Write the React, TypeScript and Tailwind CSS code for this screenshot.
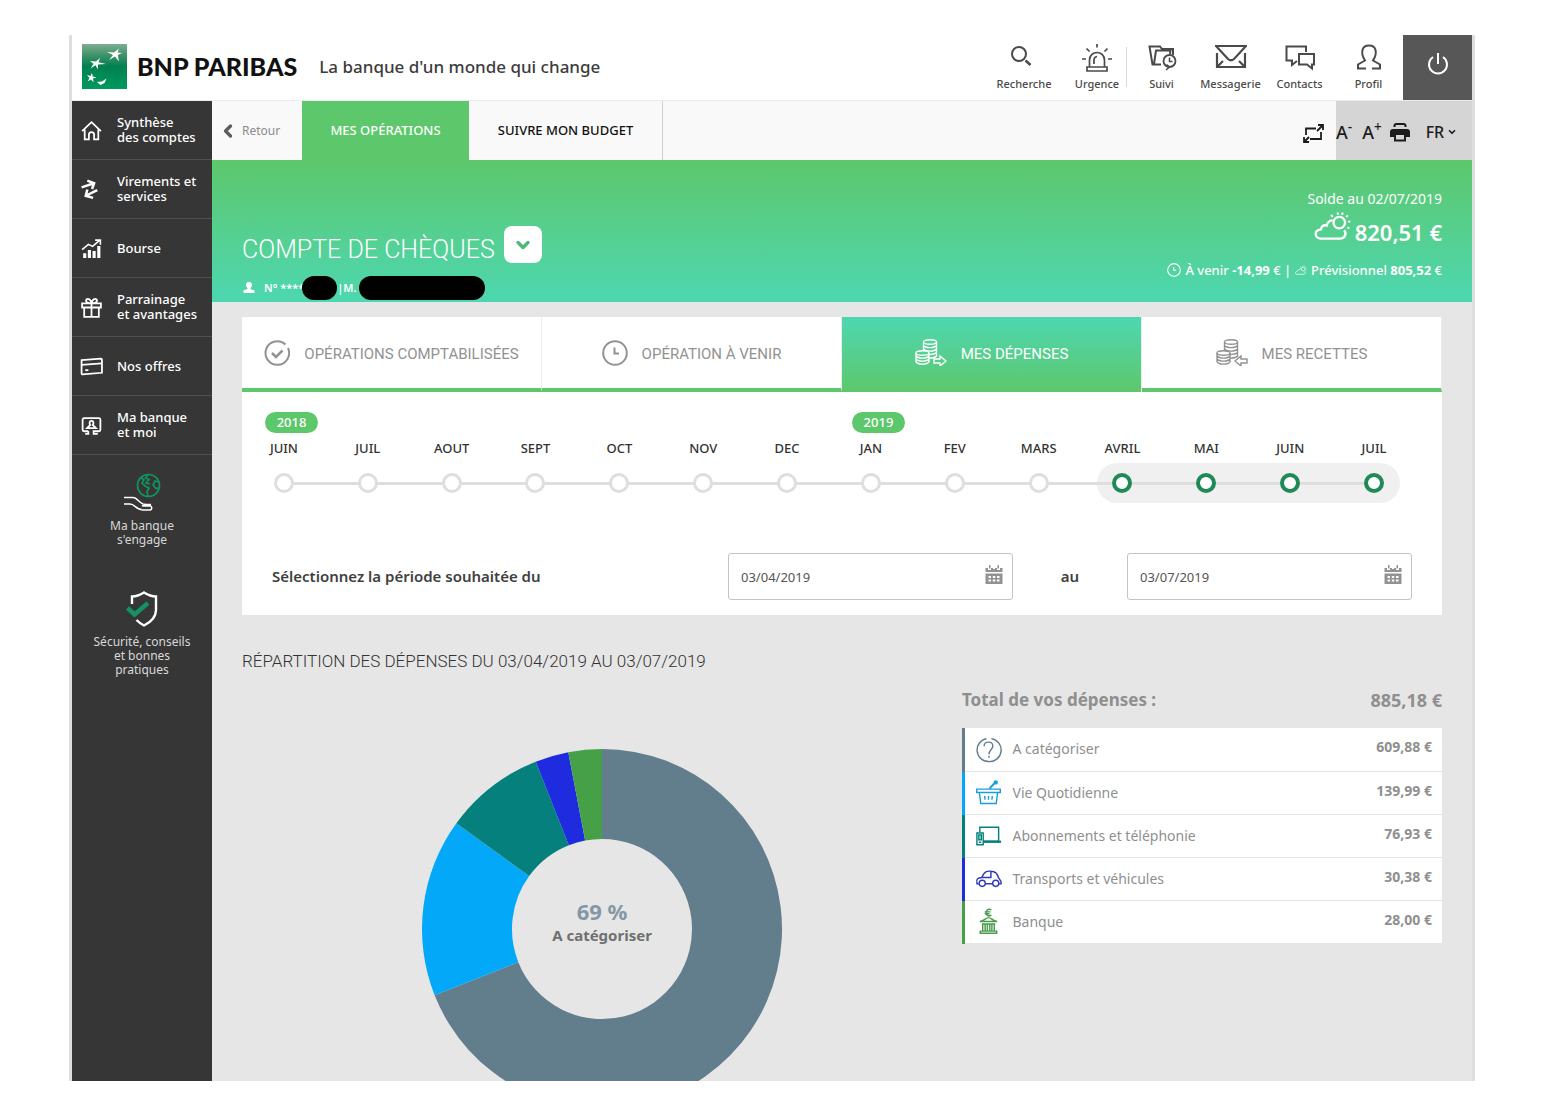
import { useState } from 'react'
import type { ReactNode } from 'react'
import { ChevronDown, ChevronLeft } from 'lucide-react'

const CONDENSED = "font-['Liberation_Sans_Narrow','Roboto',sans-serif]"

interface SvgProps {
  className: string
  viewBox?: string
  strokeWidth?: number
  children: ReactNode
}

function Svg({ className, viewBox = '0 0 32 32', strokeWidth = 2, children }: SvgProps) {
  return (
    <svg
      className={className}
      viewBox={viewBox}
      fill="none"
      stroke="currentColor"
      strokeWidth={strokeWidth}
      aria-hidden="true"
    >
      {children}
    </svg>
  )
}

function Logo() {
  return (
    <svg className="size-[45px] shrink-0" viewBox="0 0 45 45" aria-hidden="true">
      <defs>
        <linearGradient id="logo" x1="0" y1="0" x2="0" y2="1">
          <stop offset="0" stopColor="#7fae93" />
          <stop offset="0.25" stopColor="#3f9268" />
          <stop offset="0.5" stopColor="#008050" />
          <stop offset="1" stopColor="#009a5e" />
        </linearGradient>
      </defs>
      <rect width="45" height="45" fill="url(#logo)" />
      <g fill="#fff">
        <path d="M25 8 L32 8.500 L37 4.500 L35.500 8.500 L40 9 L35.800 11 L37 17.500 L33 12.500 L27 16 L31 11 Z" />
        <path d="M8 17 L14 17.500 L18 14 L16.500 18.200 L24 20 L16 20.500 L16 25.500 L13.500 21.200 L8.500 24.500 L11.500 19.800 Z" />
        <path d="M5 31 L8.500 32 L10 29 L10.800 32.500 L14.500 33.500 L11 34.500 L11.500 38.500 L9 35.500 L5.500 37.500 L7.500 34 Z" />
        <path d="M15 38 L20 37.500 L24.500 34.500 L22.500 39 L18.500 41 Z" />
      </g>
    </svg>
  )
}

function HandGlobe() {
  return (
    <Svg className="h-[38px] w-10" viewBox="0 0 40 38">
      <g stroke="#12935f" strokeWidth="1.7">
        <circle cx="26.500" cy="12.500" r="11" />
        <path d="M19 4.500 L22 7 L20 10 L23 13 L27 15 L25 18.500 L26 23 M26 2 L23.500 5 L27 6.500 L24 10 L28 11 M37 9 L33 8 L31 12 L34 15.500 L36.500 15" />
      </g>
      <path
        d="M2 24.500 h9 c4 0 6 5 10 6.500 l3 0.500 M2 31 h6 c5 0 6 6 13 6 h7 c2 0 2.500-4 0-4 h-7 M20 33 l4-1.500 h5"
        stroke="#fff"
        strokeWidth="1.500"
      />
    </Svg>
  )
}

function ShieldCheck() {
  return (
    <Svg className="h-9 w-8" viewBox="0 0 32 36">
      <path
        d="M6 13 V5.500 C11 5.500 14 4 18 1.500 C22 4 25 5.500 30 5.500 V19 C30 27 24 31.500 18 34.500 C15 33 12.500 31 10.500 29"
        stroke="#fff"
        strokeWidth="2.400"
      />
      <path d="M1.500 17 L8.500 23.500 L22 12" stroke="#12935f" strokeWidth="4.500" />
    </Svg>
  )
}

function Clock({ className }: { className: string }) {
  return (
    <Svg className={className} viewBox="0 0 26 26">
      <circle cx="13" cy="13" r="11.800" />
      <path d="M12.500 7.500 V13.500 H17" />
    </Svg>
  )
}

function CloudSun({ className }: { className: string }) {
  return (
    <Svg className={className} viewBox="0 0 38 30" strokeWidth={2.4}>
      <path d="M31 20 c3 3 1 8.500-4 8.500 H7 c-7 0-7.500-8.500 0-9.500 c1-4 4-4.500 6-4 c1-4 3-5 6-5.500" />
      <circle cx="26" cy="12" r="6" />
      <path
        d="M24.500 1.500 v2.500 M29.500 1.500 l-0.500 2.500 M17.500 4 l1.800 2 M35 4.500 l-2 1.800 M37.500 11 h-2.500 M36.500 18 l-2.200-1"
        strokeWidth="2"
      />
    </Svg>
  )
}

function Coins({ incoming = false }: { incoming?: boolean }) {
  return (
    <Svg className="h-[27px] w-8" viewBox="0 0 32 27" strokeWidth={1.4}>
      <ellipse cx="15" cy="3" rx="6.500" ry="2.200" />
      <path d="M8.500 3 V12 M21.500 3 V18 M8.500 6.500 c2 2.800 11 2.800 13 0 M8.500 10 c2 2.800 11 2.800 13 0 M14 15.500 c3 0 6-0.500 7.500-2 M14.500 19 c3 0 6-0.500 7-2" />
      <ellipse cx="7.500" cy="14" rx="6.500" ry="2.200" />
      <path d="M1 14 V22.500 c1 3.500 12 3.500 13 0 V14 M1 17 c2 2.800 11 2.800 13 0 M1 20 c2 2.800 11 2.800 13 0" />
      {incoming ? (
        <path d="M31 20 h-6 v-3 l-6 5 l6 5 v-3 h6 Z" />
      ) : (
        <path d="M19 20 h6 v-3 l6 5 l-6 5 v-3 h-6 Z" />
      )}
    </Svg>
  )
}

function Calendar() {
  return (
    <svg
      className="absolute top-[11px] right-[10px] h-5 w-[18px] text-[#929292]"
      viewBox="0 0 18 20"
      fill="currentColor"
      aria-hidden="true"
    >
      <path d="M0.500 4 h2.500 v2 h3 v-2 h2 v1 h2 v-1 h2 v2 h3 v-2 h2.500 v4 H0.500 Z M4 1 h1.500 v3.500 H4 Z M12.500 1 H14 v3.500 h-1.500 Z" />
      <path d="M0.500 9.500 h17 v10.500 H0.500 Z" />
      <path
        d="M3.500 12 h2.500 v2 H3.500 Z M7.800 12 h2.500 v2 H7.800 Z M12 12 h2.500 v2 h-2.500 Z M3.500 15.500 h2.500 v2 H3.500 Z M7.800 15.500 h2.500 v2 H7.800 Z M12 15.500 h2.500 v2 h-2.500 Z"
        fill="#fff"
      />
    </svg>
  )
}

const HEADER_LINKS = [
  {
    label: 'Recherche',
    cell: 'w-[86px]',
    icon: (
      <Svg className="size-8">
        <circle cx="11" cy="12" r="7" />
        <path d="M17.500 18.500 L22.500 23" strokeWidth="2.600" />
      </Svg>
    ),
  },
  {
    label: 'Urgence',
    cell: 'w-[60px]',
    icon: (
      <Svg className="size-8" strokeWidth={1.7}>
        <path d="M8.500 25 V18 a7.500 7.500 0 0 1 15 0 V25 M6 25 h20 v4 H6 Z M13 22 v-4 q0-3 3-3.500 M16 2 v3.500 M5.500 6.500 l3 3 M26.500 6.500 l-3 3 M1 17 h4 M27 17 h4" />
      </Svg>
    ),
  },
  {
    label: 'Suivi',
    cell: 'w-[69px]',
    icon: (
      <Svg className="size-8">
        <path d="M15 22.500 H6.500 L3.500 4.500 H14 L16 7 H27 V13 M8 22 L10 8.500 H24.500 L24 12" />
        <circle cx="23.500" cy="19" r="6" strokeWidth="1.800" />
        <path d="M23.500 15.500 v4 h3 M20 28 l3.500-3 l-3-2.500" strokeWidth="1.500" />
      </Svg>
    ),
  },
  {
    label: 'Messagerie',
    cell: 'w-[69px]',
    icon: (
      <Svg className="size-8" strokeWidth={2.2}>
        <path d="M1 4 H31 L19 17 Q16 19.500 13 17 Z M2 11 V25 H30 V11 M2 25 L8 19 M30 25 L24 19" />
      </Svg>
    ),
  },
  {
    label: 'Contacts',
    cell: 'w-[69px]',
    icon: (
      <Svg className="size-8">
        <path d="M13 19 L8 23 V18.500 H2.500 V4.500 H22 V10" />
        <path d="M15 12 H30 V22.500 H28 V26.500 L23 22.500 H15 Z" />
      </Svg>
    ),
  },
  {
    label: 'Profil',
    cell: 'w-[69px]',
    icon: (
      <Svg className="size-8">
        <path d="M13 26.500 H5 V22.500 L12 18.500 C9 14 9 10 9.500 8 C11 2 21 2 22.500 8 C23 10 23 14 20 18.500 L27 22.500 V26.500 H19" />
      </Svg>
    ),
  },
]

const NAV = [
  {
    label: ['Synthèse', 'des comptes'],
    icon: (
      <path d="M2 11.500 L11 3 L20 11.500 M4.500 10 V19.500 H8.500 V15 q0-2.500 2.500-2.500 t2.500 2.500 V19.500 H17.500 V10" />
    ),
  },
  {
    label: ['Virements et', 'services'],
    icon: (
      <path
        d="M1.500 9 L12 5.500 M7 2.500 L13.500 5 L11.500 10.500 M16.500 11.500 L6.500 16.500 M7 11 L5.500 17 L12.500 19"
        strokeWidth="2.400"
      />
    ),
  },
  {
    label: ['Bourse'],
    icon: (
      <>
        <path d="M4.500 20 V15.500 M9 20 V12.500 M13.500 20 V13.500 M18 20 V8.500" strokeWidth="3" />
        <path d="M2 12 L8 7 L12 9 L19 3 M14.500 3 H19.500 V7.500" strokeWidth="1.500" />
      </>
    ),
  },
  {
    label: ['Parrainage', 'et avantages'],
    icon: (
      <path d="M2 7 H20 V11 H2 Z M4 11 V20 H18 V11 M11 7 V20 M11 7 C8 7 5 6 6 3.500 C8 1.500 10.500 4 11 7 C11.500 4 14 1.500 16 3.500 C17 6 14 7 11 7" />
    ),
  },
  {
    label: ['Nos offres'],
    icon: (
      <>
        <path d="M1.500 5 L20 3.500 Q21 3.500 21 4.500 L21 17 L2.500 18.500 Q1.500 18.500 1.500 17.500 Z" />
        <path d="M1.500 9.500 L21 8" />
        <path d="M5 14.500 H8" />
      </>
    ),
  },
  {
    label: ['Ma banque', 'et moi'],
    icon: (
      <>
        <path d="M8 16.500 H4 Q2.500 16.500 2.500 15 V5.500 Q2.500 4 4 4 H18 Q19.500 4 19.500 5.500 V15 Q19.500 16.500 18 16.500 H13 V19 H17 M8 16.500 V19 H5" />
        <path d="M11 6.500 c2.500 0 2 3 1.200 4 l3 3 h-8.400 l3-3 c-0.800-1-1.300-4 1.200-4 Z" />
      </>
    ),
  },
]

const TABS = [
  {
    label: 'Opérations comptabilisées',
    icon: (
      <Svg className="size-[26px]" viewBox="0 0 26 26">
        <path d="M21.500 4.500 A11.800 11.800 0 1 0 24 8" />
        <path d="M8 13 L12 17 L18.500 10.500" strokeWidth="2.500" />
      </Svg>
    ),
  },
  { label: 'Opération à venir', icon: <Clock className="size-[26px]" /> },
  { label: 'Mes dépenses', icon: <Coins /> },
  { label: 'Mes recettes', icon: <Coins incoming /> },
]

const MONTHS = [
  { name: 'JUIN', year: 2018 },
  { name: 'JUIL' },
  { name: 'AOUT' },
  { name: 'SEPT' },
  { name: 'OCT' },
  { name: 'NOV' },
  { name: 'DEC' },
  { name: 'JAN', year: 2019 },
  { name: 'FEV' },
  { name: 'MARS' },
  { name: 'AVRIL' },
  { name: 'MAI' },
  { name: 'JUIN' },
  { name: 'JUIL' },
]

const FIRST_SELECTED = 10

const CATEGORIES = [
  {
    label: 'A catégoriser',
    amount: '609,88 €',
    share: 69,
    color: '#627d8b',
    border: 'border-l-[#627d8b]',
    text: 'text-[#627d8b]',
    icon: (
      <>
        <path d="M11 1.700 A12 12 0 0 0 13 25.500 A12 12 0 0 0 16 1.700" />
        <path d="M8.500 9.500 C8.500 4 17.500 4 17.500 9.500 C17.500 13 13.500 13 13.500 18 M13.500 19.500 V21.500" />
      </>
    ),
  },
  {
    label: 'Vie Quotidienne',
    amount: '139,99 €',
    share: 16,
    color: '#03a9f8',
    border: 'border-l-[#03a9f8]',
    text: 'text-[#1a9fdc]',
    icon: (
      <>
        <path d="M0.800 9.500 H25.200 V13 H0.800 Z M3.500 13 L5 24.500 H21 L22.500 13 M9 16.500 L9.500 20.500 M13 16.500 V20.500 M17 16.500 L16.500 20.500" />
        <path d="M14 9 L20 2.500" strokeWidth="2.200" />
        <circle cx="20.500" cy="2.500" r="1.500" fill="currentColor" />
      </>
    ),
  },
  {
    label: 'Abonnements et téléphonie',
    amount: '76,93 €',
    share: 9,
    color: '#06807d',
    border: 'border-l-[#06807d]',
    text: 'text-[#06807d]',
    icon: (
      <>
        <path d="M4 10 V4.500 H23.500 V19 H8" />
        <path d="M1 10.500 H7.500 V22.500 H1 Z M3 12.500 h2.500 v5 H3 Z M3 20 h2.500" />
        <path d="M8 19.500 H26" strokeWidth="2.400" />
      </>
    ),
  },
  {
    label: 'Transports et véhicules',
    amount: '30,38 €',
    share: 3,
    color: '#1e2bde',
    border: 'border-l-[#1e2bde]',
    text: 'text-[#333cb8]',
    icon: (
      <>
        <circle cx="6.500" cy="18" r="3.200" />
        <circle cx="20.500" cy="18" r="3.200" />
        <path d="M3 18.500 H1 C0 13 2 12.500 6 12 C9 5 12 5 16 5.500 C21 5.500 22.500 9 23.500 12.500 L26 16 V18.500 H24 M10 18.500 H17 M6 12 H15.500 V5.500" />
      </>
    ),
  },
  {
    label: 'Banque',
    amount: '28,00 €',
    share: 3,
    color: '#45a048',
    border: 'border-l-[#45a048]',
    text: 'text-[#4b9a4e]',
    icon: (
      <>
        <path d="M16 1 C12 -1 10.500 2 10.500 4 C10.500 6 12 8 16 6.500 M9 3 H15 M9 5 H14" />
        <path d="M4 13 C9 12.500 10 9 13 9 C16 9 17 12.500 22 13 Z M6 15.500 H20 M7 15.500 V23 H9.500 V15.500 M11.800 15.500 V23 H14.300 V15.500 M16.500 15.500 V23 H19 V15.500 M4.500 25.200 H21.500 V23 H4.500 Z" />
      </>
    ),
  },
]

function point(share: number, radius: number) {
  const angle = (share / 100) * 2 * Math.PI
  return `${180 + radius * Math.sin(angle)} ${180 - radius * Math.cos(angle)}`
}

function slicePath(start: number, end: number) {
  const large = end - start > 50 ? 1 : 0
  return `M${point(start, 180)} A180 180 0 ${large} 1 ${point(end, 180)} L${point(end, 90)} A90 90 0 ${large} 0 ${point(start, 90)} Z`
}

function Donut() {
  const slices = CATEGORIES.map((category, i) => {
    const start = CATEGORIES.slice(0, i).reduce((sum, c) => sum + c.share, 0)
    return { color: category.color, d: slicePath(start, start + category.share) }
  })

  return (
    <div className="relative size-[360px] shrink-0">
      <svg className="size-full" viewBox="0 0 360 360" aria-hidden="true">
        {slices.map((slice) => (
          <path key={slice.color} d={slice.d} fill={slice.color} />
        ))}
      </svg>
      <div className="absolute inset-0 flex flex-col items-center justify-center pb-3 font-bold">
        <span className="text-[22px] leading-6 text-[#8397a4]">69 %</span>
        <span className="text-[15px] leading-6 text-[#707070]">A catégoriser</span>
      </div>
    </div>
  )
}

function Header() {
  return (
    <header className="flex h-[66px] shrink-0 border-b border-[#ececec]">
      <div className="flex flex-1 items-center pb-0.5 pl-[10px]">
        <Logo />
        <span className="ml-[10px] font-['Lato',sans-serif] text-[25px] font-black text-[#111]">
          BNP PARIBAS
        </span>
        <span className="ml-[22px] text-[17px] font-medium text-[#3c3c3c]">
          La banque d'un monde qui change
        </span>
      </div>
      <nav className="flex items-center pb-0.5 text-[#4a4a4a]">
        {HEADER_LINKS.map((link) => (
          <div key={link.label} className="flex items-center">
            {link.label === 'Suivi' && <span className="-ml-px h-10 w-px bg-[#dadada]" />}
            <a
              href="#"
              className={`flex flex-col items-center gap-0.5 text-[11px] leading-4 font-medium ${link.cell}`}
            >
              {link.icon}
              {link.label}
            </a>
          </div>
        ))}
      </nav>
      <button
        type="button"
        aria-label="Déconnexion"
        className="flex w-[69px] items-center justify-center bg-[#575757] pb-2 text-white"
      >
        <Svg className="size-6" viewBox="0 0 24 24">
          <path d="M7 5 A9 9 0 1 0 17 5 M12 1 V12" />
        </Svg>
      </button>
    </header>
  )
}

function Sidebar() {
  return (
    <aside className="w-[140px] shrink-0 bg-[#363636] text-white">
      <nav>
        {NAV.map((item) => (
          <a
            key={item.label[0]}
            href="#"
            className="flex h-[59px] items-center gap-3.5 border-b border-[#505050] pl-2"
          >
            <Svg className="size-[23px] shrink-0" viewBox="0 0 22 22" strokeWidth={1.7}>
              {item.icon}
            </Svg>
            <span className="text-[13px] leading-[15px] font-medium whitespace-nowrap">
              {item.label.map((line) => (
                <span key={line} className="block">
                  {line}
                </span>
              ))}
            </span>
          </a>
        ))}
      </nav>
      <div className="flex flex-col gap-11 pt-[18px] text-center text-xs leading-[14px] text-[#d8d8d8]">
        <a href="#" className="flex flex-col items-center gap-2">
          <HandGlobe />
          <span>
            <span className="block">Ma banque</span>
            <span className="block">s'engage</span>
          </span>
        </a>
        <a href="#" className="flex flex-col items-center gap-2">
          <ShieldCheck />
          <span>
            <span className="block">Sécurité, conseils</span>
            <span className="block">et bonnes</span>
            <span className="block">pratiques</span>
          </span>
        </a>
      </div>
    </aside>
  )
}

function Toolbar() {
  return (
    <div className="flex h-[59px] shrink-0 bg-[#f9f9f9] text-[13px]">
      <a href="#" className="flex w-[90px] items-center gap-1 pl-1.5 text-[#8b8b8b]">
        <ChevronLeft className="size-5 text-[#5c5c5c]" strokeWidth={4} />
        <span className="text-xs">Retour</span>
      </a>
      <a
        href="#"
        className="flex w-[167px] items-center justify-center bg-[#5dc76b] font-medium text-white"
      >
        MES OPÉRATIONS
      </a>
      <a
        href="#"
        className="flex w-[194px] items-center justify-center border-r border-[#cfcfcf] font-medium text-[#111]"
      >
        SUIVRE MON BUDGET
      </a>
      <div className="ml-auto flex items-center pt-1 pr-3 text-[#1c1c1c]">
        <button type="button" aria-label="Plein écran">
          <Svg className="h-5 w-[21px]" viewBox="0 0 21 20" strokeWidth={1.8}>
            <path d="M3 12 V5.500 H13 M18 9 V16 H7 M15 2 H20 V7 M20 2 L14 8 M1 14 V19 H6 M1 19 L6 14" />
          </Svg>
        </button>
      </div>
      <div className="flex w-[136px] items-center bg-[#d5d5d5] pt-0.5 text-lg font-medium text-[#1c1c1c]">
        <button type="button">
          A<sup>-</sup>
        </button>
        <button type="button" className="ml-2.5">
          A<sup>+</sup>
        </button>
        <button type="button" aria-label="Imprimer" className="ml-2">
          <svg className="size-5" viewBox="0 0 20 20" aria-hidden="true">
            <path d="M4.500 5 V4 Q4.500 2 6.500 2 H13.500 Q15.500 2 15.500 4 V5" fill="none" stroke="currentColor" strokeWidth="2" />
            <path d="M3 7 H17 Q20 7 20 10 V15 H16 V12 H4 V15 H0 V10 Q0 7 3 7 Z" fill="currentColor" />
            <path d="M5 12 V18.500 H15 V12 Z" fill="none" stroke="currentColor" strokeWidth="2" />
          </svg>
        </button>
        <label className="ml-4 flex items-center">
          <select
            aria-label="Langue"
            className="w-[21px] appearance-none overflow-visible text-base"
            defaultValue="FR"
          >
            <option>FR</option>
          </select>
          <ChevronDown className="size-2.5" strokeWidth={4} />
        </label>
      </div>
    </div>
  )
}

function AccountBanner() {
  return (
    <section className="flex h-[142px] shrink-0 justify-between bg-linear-to-b from-[#5dc76b] to-[#4dd7b0] px-[30px] text-white">
      <div className="flex flex-col justify-end pb-0.5">
        <div className="flex items-start gap-[9px]">
          <h1 className={`pt-1.5 text-[25px] leading-9 ${CONDENSED} font-light`}>
            COMPTE DE CHÈQUES
          </h1>
          <button
            type="button"
            aria-label="Changer de compte"
            className="flex h-[37px] w-[38px] items-center justify-center rounded-lg bg-white text-[#4fb873]"
          >
            <ChevronDown className="size-5" strokeWidth={4} />
          </button>
        </div>
        <div className="mt-2 flex h-6 items-center text-[11px] font-semibold">
          <svg className="size-3.5" viewBox="0 0 14 14" fill="currentColor" aria-hidden="true">
            <path d="M7 1 c4 0 3.500 4.500 1.500 6 v1 l4 1.500 v2.500 h-11 V9.500 l4-1.500 V7 C3.500 5.500 3 1 7 1 Z" />
          </svg>
          <span className="ml-2">N° ****</span>
          <span className="-ml-0.5 h-6 w-[35px] rounded-full bg-black" />
          <span>|M.</span>
          <span className="ml-0.5 h-6 w-[126px] rounded-full bg-black" />
        </div>
      </div>
      <div className="flex flex-col items-end justify-end pb-6">
        <p className="text-sm leading-4">Solde au 02/07/2019</p>
        <p className="mt-1 flex items-center gap-1 text-[22px] leading-[30px] font-semibold">
          <CloudSun className="mb-3 h-[29px] w-[37px]" />
          820,51 €
        </p>
        <p className="mt-2.5 flex items-center gap-1 text-[13px] leading-4 font-medium">
          <Clock className="size-3.5" />
          <span>
            À venir <b>-14,99</b> € |
          </span>
          <CloudSun className="h-2.5 w-3" />
          <span>
            Prévisionnel <b>805,52</b> €
          </span>
        </p>
      </div>
    </section>
  )
}

function Tabs() {
  const [active, setActive] = useState(2)

  return (
    <div role="tablist" className="grid grid-cols-4">
      {TABS.map((tab, i) => (
        <button
          key={tab.label}
          type="button"
          role="tab"
          aria-selected={i === active}
          onClick={() => setActive(i)}
          className={`flex h-[75px] items-center justify-center gap-3.5 border-r border-r-[#ececec] ${CONDENSED} text-[15px] uppercase ${
            i === active
              ? 'bg-linear-to-b from-[#4dd7b0] to-[#5dc76b] pb-1 text-white'
              : 'border-b-4 border-b-[#5dc76b] text-[#929292]'
          }`}
        >
          {tab.icon}
          <span className="pt-1">{tab.label}</span>
        </button>
      ))}
    </div>
  )
}

function Timeline() {
  return (
    <div className="pt-5 pr-[26px]">
      <div className="grid grid-cols-14 text-[13px] font-medium text-[#333]">
        {MONTHS.map((month, i) => (
          <div key={i}>
            <div className="h-[21px] pl-[23px]">
              {month.year && (
                <span className="block h-[21px] w-[53px] rounded-full bg-[#5dc76b] text-center leading-[21px] text-white">
                  {month.year}
                </span>
              )}
            </div>
            <div className="mt-1.5 text-center leading-[18px]">{month.name}</div>
          </div>
        ))}
      </div>
      <div className="mt-1.5 grid items-center">
        <div className="grid grid-cols-14 [grid-area:1/1]">
          <div className="col-span-4 col-start-11 mx-4 h-10 rounded-full bg-[#f0f0f0]" />
        </div>
        <div className="mx-[42px] h-[3px] bg-[#dedede] [grid-area:1/1]" />
        <div className="grid grid-cols-14 justify-items-center [grid-area:1/1]">
          {MONTHS.map((month, i) => (
            <button
              key={i}
              type="button"
              aria-label={month.name}
              className={`size-5 rounded-full bg-white ${
                i >= FIRST_SELECTED
                  ? 'border-4 border-[#1f8a58]'
                  : 'border-3 border-[#dedede]'
              }`}
            />
          ))}
        </div>
      </div>
    </div>
  )
}

function DateField({ id, value }: { id: string; value: string }) {
  return (
    <div className="relative">
      <input
        id={id}
        type="text"
        defaultValue={value}
        className="h-[47px] w-full rounded-[3px] border border-[#c4c4c4] bg-white px-3 text-[13px] font-normal text-[#555]"
      />
      <Calendar />
    </div>
  )
}

function Expenses() {
  return (
    <section className="grid grid-cols-[3fr_2fr]">
      <div className="flex justify-center pt-[62px]">
        <Donut />
      </div>
      <div className="text-[#8f8f8f]">
        <div className="flex justify-between text-[17px] leading-[26px] font-bold">
          <span>Total de vos dépenses :</span>
          <span className="text-lg leading-[26px]">885,18 €</span>
        </div>
        <table className="mt-[15px] w-full border-collapse bg-white">
          <tbody>
            {CATEGORIES.map((category) => (
              <tr
                key={category.label}
                className={`h-[43px] border-b border-b-[#e6e6e6] border-l-3 ${category.border}`}
              >
                <td className="w-[49px] pl-[10px]">
                  <Svg
                    className={`size-[27px] ${category.text}`}
                    viewBox="-1 -1 28 28"
                    strokeWidth={1.5}
                  >
                    {category.icon}
                  </Svg>
                </td>
                <td className="text-sm">{category.label}</td>
                <td className="pr-[10px] pb-1 text-right text-sm font-bold">
                  {category.amount}
                </td>
              </tr>
            ))}
          </tbody>
        </table>
      </div>
    </section>
  )
}

export default function App() {
  return (
    <div className="h-screen bg-white pt-[35px] pr-[70px] pb-9 pl-[69px] font-['Noto_Sans','Open_Sans',sans-serif]">
      <div className="flex h-full flex-col overflow-hidden border-x-3 border-[#dedede]">
        <Header />
        <div className="flex min-h-0 flex-1">
          <Sidebar />
          <div className="flex min-w-0 flex-1 flex-col bg-[#e6e6e6]">
            <Toolbar />
            <AccountBanner />
            <main className="px-[30px] pt-[15px]">
              <section className="bg-white">
                <Tabs />
                <Timeline />
                <div className="mt-[50px] grid grid-cols-[8fr_5fr_2fr_5fr] items-center px-[30px] pb-[15px] text-[15px] font-semibold text-[#3f3f3f]">
                  <label htmlFor="from">Sélectionnez la période souhaitée du</label>
                  <DateField id="from" value="03/04/2019" />
                  <label htmlFor="to" className="text-center">
                    au
                  </label>
                  <DateField id="to" value="03/07/2019" />
                </div>
              </section>
              <h2 className={`pt-[30px] text-[17px] leading-8 ${CONDENSED} font-light text-[#333]`}>
                RÉPARTITION DES DÉPENSES DU 03/04/2019 AU 03/07/2019
              </h2>
              <div className="mt-[10px]">
                <Expenses />
              </div>
            </main>
          </div>
        </div>
      </div>
    </div>
  )
}
